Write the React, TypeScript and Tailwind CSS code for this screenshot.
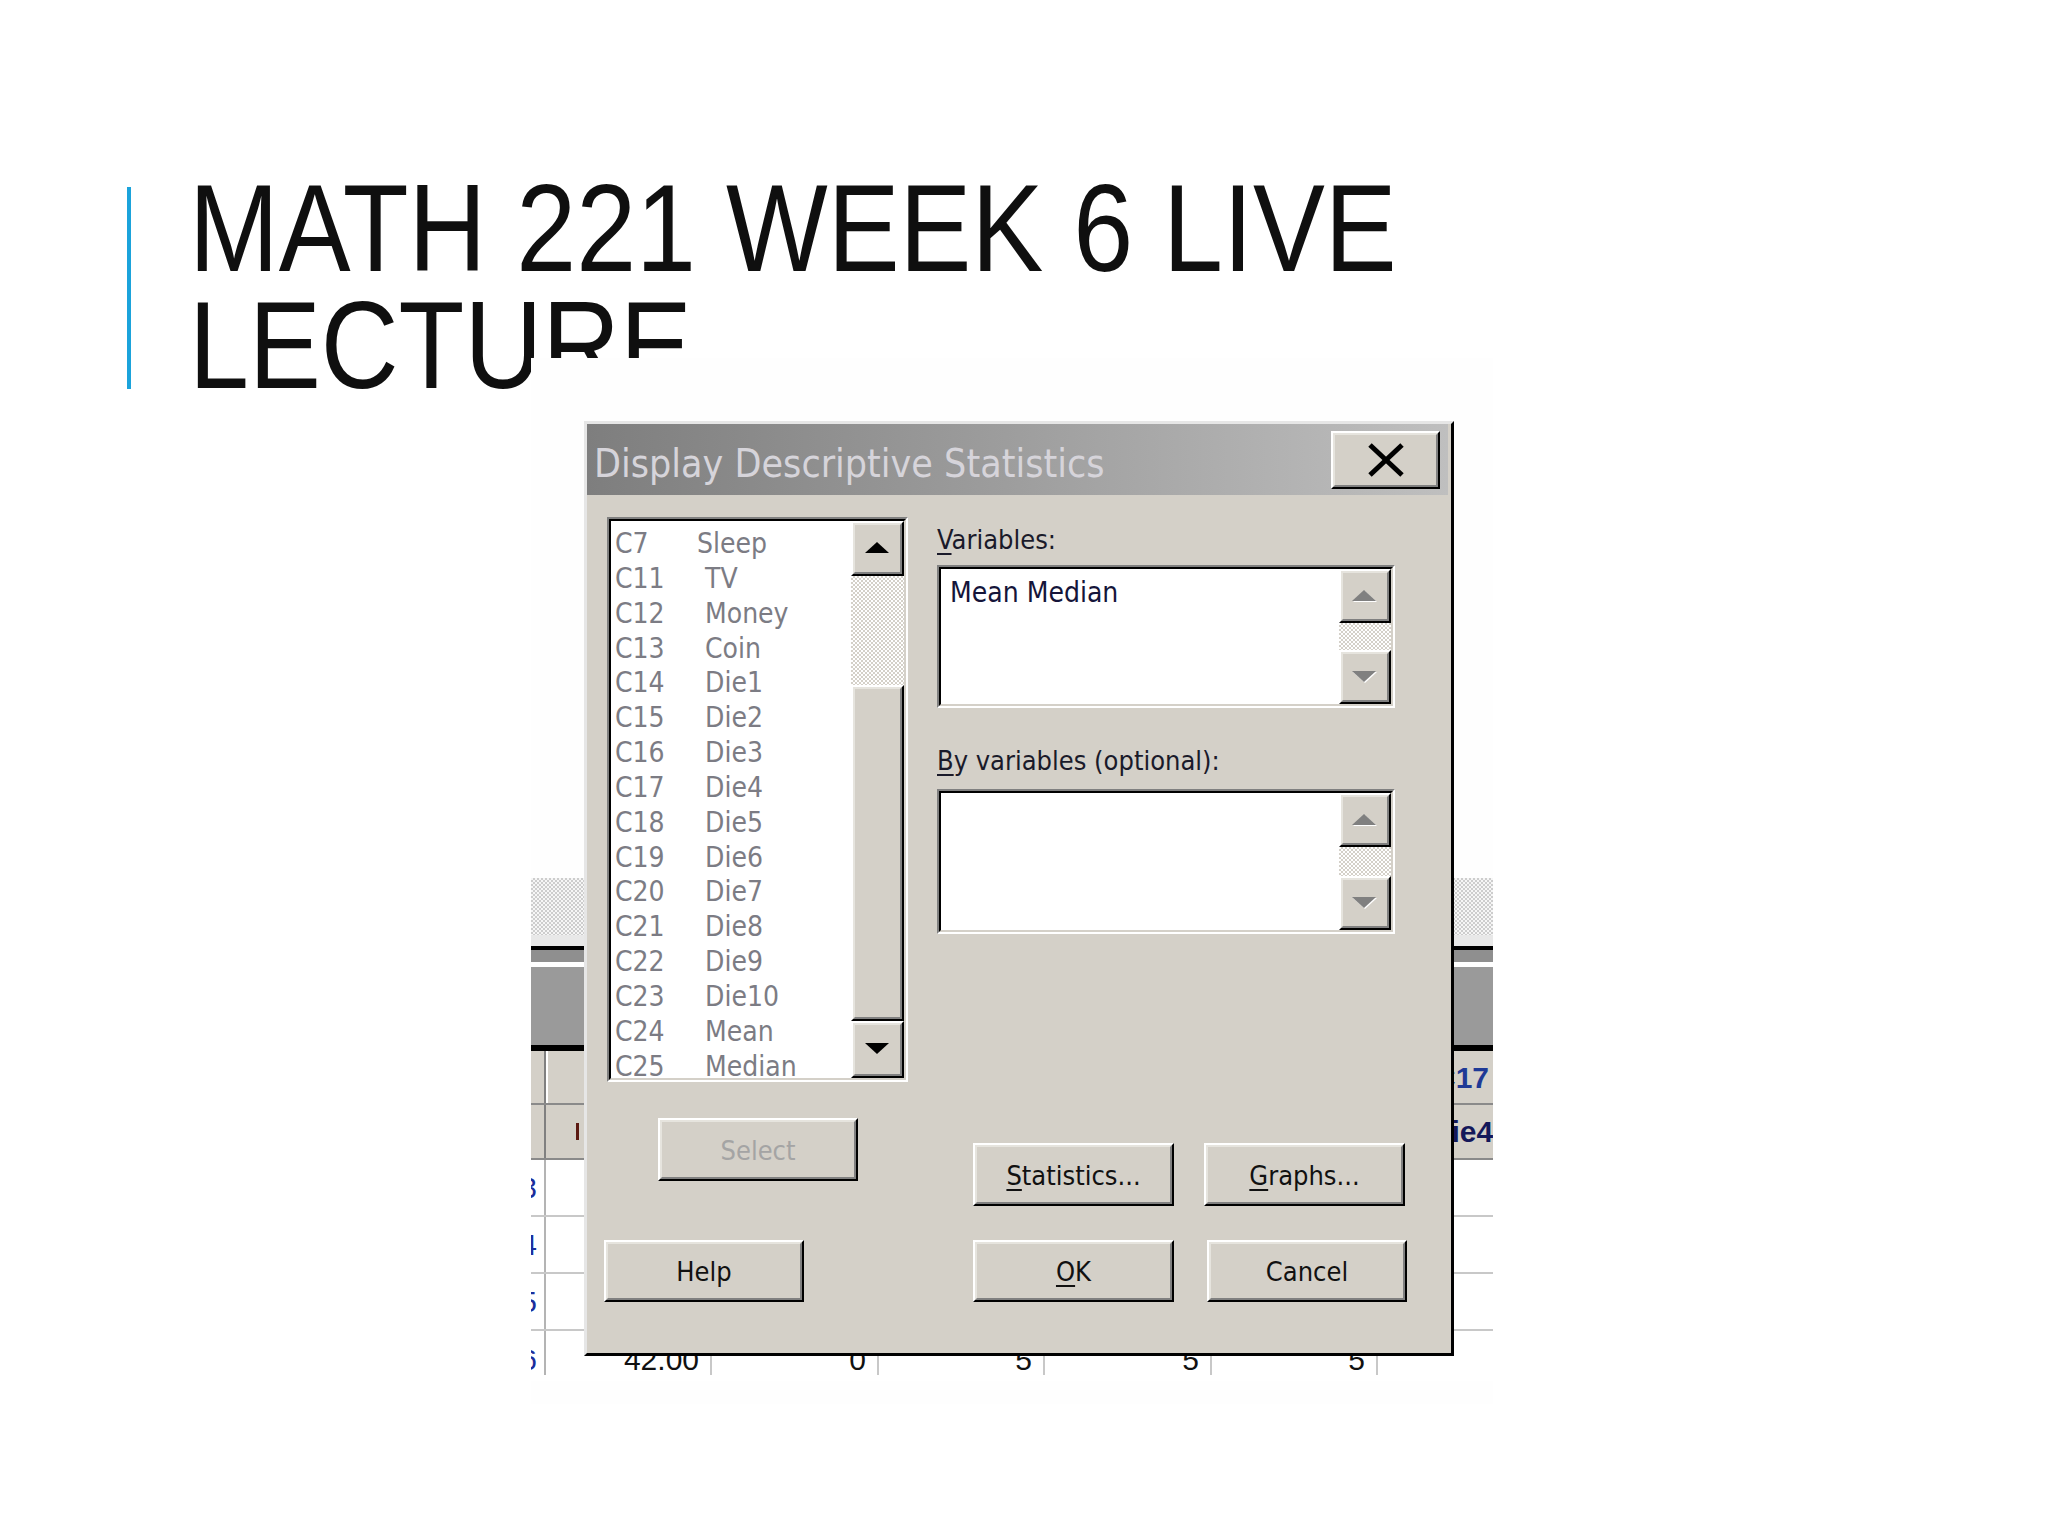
import type { ReactNode } from "react";

const items: [string, string][] = [
  ["C7", "Sleep"],
  ["C11", "TV"],
  ["C12", "Money"],
  ["C13", "Coin"],
  ["C14", "Die1"],
  ["C15", "Die2"],
  ["C16", "Die3"],
  ["C17", "Die4"],
  ["C18", "Die5"],
  ["C19", "Die6"],
  ["C20", "Die7"],
  ["C21", "Die8"],
  ["C22", "Die9"],
  ["C23", "Die10"],
  ["C24", "Mean"],
  ["C25", "Median"],
];

function Arrow({ up, muted }: { up?: boolean; muted?: boolean }) {
  const pts = up ? "12,0 24,11 0,11" : "0,0 24,0 12,11";
  const shadow = up ? "13,1 25,12 1,12" : "1,1 25,1 13,12";
  return (
    <svg width="26" height="13" viewBox="0 0 26 13">
      {muted && <polygon points={shadow} fill="#ffffff" />}
      <polygon points={pts} fill={muted ? "#808080" : "#000000"} />
    </svg>
  );
}

function WinButton({ className, children }: { className: string; children?: ReactNode }) {
  return (
    <div
      className={`${className} bg-[#d4d0c8] border-2 border-t-white border-l-white border-r-black border-b-black`}
    >
      <div className="flex h-full w-full items-center justify-center border-2 border-t-[#e6e4de] border-l-[#e6e4de] border-r-[#808080] border-b-[#808080]">
        {children}
      </div>
    </div>
  );
}

function Sunken({ className, children }: { className: string; children?: ReactNode }) {
  return (
    <div className={`${className} border-2 border-t-[#808080] border-l-[#808080] border-r-white border-b-white`}>
      <div className="flex h-full w-full overflow-hidden border-2 border-t-black border-l-black border-r-[#d4d0c8] border-b-[#d4d0c8] bg-white">
        {children}
      </div>
    </div>
  );
}

const checker =
  "bg-[repeating-conic-gradient(#d4d0c8_0%_25%,#ffffff_0%_50%)] bg-size-[4px_4px]";

function SmallScroll() {
  return (
    <div className="flex w-[52px] flex-col">
      <WinButton className="h-[54px] w-full">
        <Arrow up muted />
      </WinButton>
      <div className={`flex-1 ${checker}`} />
      <WinButton className="h-[54px] w-full">
        <Arrow muted />
      </WinButton>
    </div>
  );
}

function Spreadsheet() {
  return (
    <div className="flex flex-col">
      <div className="h-[520px] bg-[#fefefe]" />
      <div className="h-[57px] bg-[repeating-conic-gradient(#cdcdcd_0%_25%,#f6f6f6_0%_50%)] bg-size-[4px_4px]" />
      <div className="h-[11px] bg-[#e8e8e8]" />
      <div className="h-[4px] bg-black" />
      <div className="h-[12px] bg-[#8f8f8f]" />
      <div className="h-[5px] bg-white" />
      <div className="h-[78px] bg-[#9a9a9a]" />
      <div className="h-[6px] bg-black" />
      {/* header rows */}
      <div className="flex h-[54px] bg-[#d4d0c8] border-b-2 border-[#8a8a8a] font-['Liberation_Sans',sans-serif] text-[30px] font-bold">
        <div className="w-[15px] shrink-0 border-r-2 border-[#808080]" />
        <div className="w-[166px] shrink-0 border-l-2 border-white border-r-2 border-r-[#808080]" />
        <div className="w-[167px] shrink-0 border-r-2 border-[#808080]" />
        <div className="w-[166px] shrink-0 border-r-2 border-[#808080]" />
        <div className="w-[167px] shrink-0 border-r-2 border-[#808080]" />
        <div className="w-[166px] shrink-0 border-r-2 border-[#808080]" />
        <div className="flex w-[167px] shrink-0 items-center justify-center text-[#1f3a96]">C17</div>
      </div>
      <div className="flex h-[55px] bg-[#d4d0c8] border-b-2 border-[#8a8a8a] font-['Liberation_Sans',sans-serif] text-[30px] font-bold">
        <div className="w-[15px] shrink-0 border-r-2 border-[#808080]" />
        <div className="flex w-[166px] shrink-0 items-center border-r-2 border-[#808080]">
          <div className="ml-[30px] h-[17px] w-[3px] bg-[#5c1a12]" />
        </div>
        <div className="w-[167px] shrink-0 border-r-2 border-[#808080]" />
        <div className="w-[166px] shrink-0 border-r-2 border-[#808080]" />
        <div className="w-[167px] shrink-0 border-r-2 border-[#808080]" />
        <div className="w-[166px] shrink-0 border-r-2 border-[#808080]" />
        <div className="flex w-[167px] shrink-0 items-center justify-center text-[#14185a]">Die4</div>
      </div>
      {/* data rows */}
      {["3", "4", "5"].map((n) => (
        <div key={n} className="flex h-[57px] border-b-2 border-[#c8c8c8] bg-white font-['Liberation_Sans',sans-serif] text-[30px]">
          <div className="flex w-[15px] shrink-0 items-center justify-end border-r-2 border-[#b4b4b4] pr-[7px] text-[#1b2e9c]">
            {n}
          </div>
          <div className="w-[166px] shrink-0 border-r-2 border-[#c8c8c8]" />
          <div className="w-[167px] shrink-0 border-r-2 border-[#c8c8c8]" />
          <div className="w-[166px] shrink-0 border-r-2 border-[#c8c8c8]" />
          <div className="w-[167px] shrink-0 border-r-2 border-[#c8c8c8]" />
          <div className="w-[166px] shrink-0 border-r-2 border-[#c8c8c8]" />
          <div className="w-[167px] shrink-0" />
        </div>
      ))}
      <div className="flex h-[50px] bg-white pb-[6px] font-['Liberation_Sans',sans-serif] text-[30px] leading-none text-[#111]">
        <div className="flex w-[15px] shrink-0 items-end justify-end border-r-2 border-[#b4b4b4] pr-[7px] text-[#1b2e9c]">
          6
        </div>
        <div className="flex w-[166px] shrink-0 items-end justify-end border-r-2 border-[#c8c8c8] pr-[11px]">42.00</div>
        <div className="flex w-[167px] shrink-0 items-end justify-end border-r-2 border-[#c8c8c8] pr-[11px]">0</div>
        <div className="flex w-[166px] shrink-0 items-end justify-end border-r-2 border-[#c8c8c8] pr-[11px]">5</div>
        <div className="flex w-[167px] shrink-0 items-end justify-end border-r-2 border-[#c8c8c8] pr-[11px]">5</div>
        <div className="flex w-[166px] shrink-0 items-end justify-end border-r-2 border-[#c8c8c8] pr-[11px]">5</div>
        <div className="w-[167px] shrink-0" />
      </div>
    </div>
  );
}

function Dialog() {
  return (
    <div className="absolute left-[53px] top-[63px] flex h-[935px] w-[870px] flex-col border-[3px] border-t-[#e6e6e6] border-l-[#e6e6e6] border-r-black border-b-black bg-[#d4d0c8] font-['DejaVu_Sans_Condensed','DejaVu_Sans',sans-serif]">
      {/* title bar */}
      <div className="mr-[3px] flex h-[71px] items-center justify-between bg-gradient-to-r from-[#7e7e7e] to-[#bfbfbf] pl-[7px] pr-[8px]">
        <span className="mt-[8px] text-[39px] leading-none text-[#d6d4da]">Display Descriptive Statistics</span>
        <WinButton className="h-[58px] w-[109px]">
          <svg width="36" height="34" viewBox="0 0 36 34">
            <path d="M2 2 L34 32 M34 2 L2 32" stroke="#000" strokeWidth="5" />
          </svg>
        </WinButton>
      </div>

      {/* body */}
      <div className="flex-1 pl-[20px] pt-[22px]">
        <div className="flex gap-[29px]">
          <Sunken className="h-[565px] w-[301px]">
            <div className="flex-1 overflow-hidden pl-[4px] pt-[6px] text-[28px] leading-[34.85px] text-[#7c7c84]">
              {items.map(([c, name]) => (
                <div key={c} className="flex">
                  <span className="w-[90px]">{c}</span>
                  <span className={c === "C7" ? "-ml-[8px]" : ""}>{name}</span>
                </div>
              ))}
            </div>
            <div className="flex w-[53px] flex-col">
              <WinButton className="h-[55px] w-full">
                <Arrow up />
              </WinButton>
              <div className={`h-[109px] ${checker}`} />
              <WinButton className="h-[336px] w-full" />
              <WinButton className="h-[57px] w-full">
                <Arrow />
              </WinButton>
            </div>
          </Sunken>

          <div className="flex w-[458px] flex-col text-[27px] leading-[34px] text-[#1a1a2a]">
            <div className="mt-[6px]">
              <span className="underline underline-offset-[4px]">V</span>ariables:
            </div>
            <Sunken className="mt-[8px] h-[143px] w-full">
              <div className="flex-1 pl-[9px] pt-[7px] text-[28px] text-[#15153a]">Mean Median</div>
              <SmallScroll />
            </Sunken>
            <div className="mt-[36px]">
              <span className="underline underline-offset-[4px]">B</span>y variables (optional):
            </div>
            <Sunken className="mt-[11px] h-[145px] w-full">
              <div className="flex-1" />
              <SmallScroll />
            </Sunken>
          </div>
        </div>

        <div className="mt-[36px] flex items-start text-[27px] text-[#111]">
          <WinButton className="ml-[51px] h-[63px] w-[200px]">
            <span className="mt-[4px] text-[#a4a4a4]">Select</span>
          </WinButton>
          <WinButton className="ml-[115px] mt-[25px] h-[63px] w-[201px]">
            <span className="mt-[3px]">
              <span className="underline underline-offset-[4px]">S</span>tatistics...
            </span>
          </WinButton>
          <WinButton className="ml-[30px] mt-[25px] h-[63px] w-[201px]">
            <span className="mt-[3px]">
              <span className="underline underline-offset-[4px]">G</span>raphs...
            </span>
          </WinButton>
        </div>

        <div className="mt-[34px] flex text-[27px] text-[#111]">
          <WinButton className="-ml-[3px] h-[62px] w-[200px]">
            <span className="mt-[3px]">Help</span>
          </WinButton>
          <WinButton className="ml-[169px] h-[62px] w-[201px]">
            <span className="mt-[3px]">
              <span className="underline underline-offset-[4px]">O</span>K
            </span>
          </WinButton>
          <WinButton className="ml-[33px] h-[62px] w-[200px]">
            <span className="mt-[3px]">Cancel</span>
          </WinButton>
        </div>
      </div>
    </div>
  );
}

export default function App() {
  return (
    <div className="relative h-[1536px] w-[2048px] overflow-hidden bg-white">
      <div className="flex gap-[58px] pl-[127px] pt-[170px]">
        <div className="mt-[17px] h-[202px] w-[4px] shrink-0 bg-[#1ba3db]" />
        <h1 className="w-[1420px] origin-left scale-x-[0.869] font-['Liberation_Sans',sans-serif] text-[124px] leading-[117px] text-[#0f0f0f]">
          MATH 221 WEEK 6 LIVE LECTURE
        </h1>
      </div>

      {/* screenshot pasted on the slide */}
      <div className="absolute left-[531px] top-[358px] h-[1046px] w-[962px] overflow-hidden bg-[#fefefe]">
        <Spreadsheet />
        <Dialog />
      </div>
    </div>
  );
}
